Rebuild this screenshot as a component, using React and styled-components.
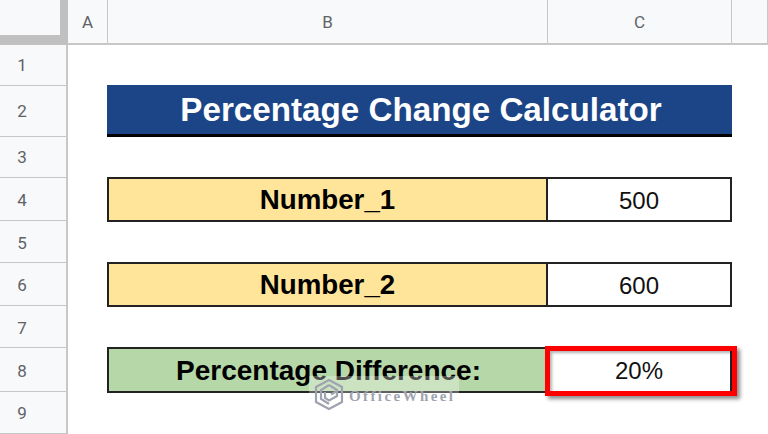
import React from 'react';
import styled, { createGlobalStyle } from 'styled-components';

const GlobalStyle = createGlobalStyle`
  html, body {
    margin: 0;
    padding: 0;
    background: #fff;
    overflow: hidden;
  }
`;

const Sheet = styled.div`
  display: grid;
  grid-template-columns: 68px 40px 440px 184px 36px;
  grid-template-rows: 45px 41px 51px 41px 43px 42px 43px 42px 44px 42px;
  width: 768px;
  height: 434px;
  font-family: Roboto, "Liberation Sans", sans-serif;
  overflow: hidden;
`;

const Corner = styled.div`
  background: #f8f9fa;
  border-right: 8px solid #c0c0c0;
  border-bottom: 10px solid #c0c0c0;
`;

const ColHead = styled.div`
  display: flex;
  align-items: center;
  justify-content: center;
  background: #f8f9fa;
  border-right: 1px solid #c7c7c7;
  border-bottom: 2px solid #c7c7c7;
  color: #5f6368;
  font-size: 17px;
`;

const RowHead = styled.div`
  display: flex;
  align-items: center;
  justify-content: center;
  padding: ${p => (p.$low ? '2px' : '0')} 22px 0 0;
  background: #f8f9fa;
  border-right: 2px solid #c7c7c7;
  border-bottom: 1px solid #c7c7c7;
  color: #5f6368;
  font-size: 17px;
`;

const Title = styled.div`
  grid-column: 3 / 5;
  display: flex;
  align-items: center;
  justify-content: center;
  margin: -1px 0 0 -1px;
  padding-left: 3px;
  background: #1c4587;
  border-bottom: 3px solid #000;
  color: #fff;
  font-family: "Liberation Sans", Arial, sans-serif;
  font-size: 33.2px;
  font-weight: 700;
`;

const Gap = styled.div`
  grid-column: 2 / 6;
`;

const Spacer = styled.div``;

const Label = styled.div`
  display: flex;
  align-items: center;
  justify-content: center;
  margin: -1px 0 -1px -1px;
  padding-top: 1px;
  background: ${p => p.$bg};
  border: 2px solid #222;
  color: #000;
  font-family: "Liberation Sans", Arial, sans-serif;
  font-size: 27.7px;
  font-weight: 700;
`;

const WideLabel = styled(Label)`
  padding-left: 2px;
  font-size: 28px;
`;

const Value = styled.div`
  position: relative;
  display: flex;
  align-items: center;
  justify-content: center;
  margin: -1px 0 -1px 0;
  padding-top: 2px;
  background: #fff;
  border: 2px solid #222;
  border-left-width: 0;
  color: #111;
  font-family: "Liberation Sans", Arial, sans-serif;
  font-size: 24px;
`;

const Highlight = styled.div`
  position: absolute;
  left: -3px;
  top: -3px;
  width: 192px;
  height: 50px;
  box-sizing: border-box;
  border: 5px solid #ff0000;
  box-shadow: 3px 3px 4px rgba(0, 0, 0, 0.45), inset 2px 2px 3px rgba(0, 0, 0, 0.3);
`;

const Watermark = styled.div`
  position: absolute;
  left: 309px;
  top: 376px;
  width: 150px;
  height: 36px;
  display: flex;
  align-items: center;
  gap: 5px;
  padding-left: 5px;
  box-sizing: border-box;
  background: linear-gradient(rgba(255, 255, 255, 0.3), rgba(255, 255, 255, 0.3) 40%, rgba(255, 255, 255, 0));
`;

const MarkText = styled.span`
  font-family: "Liberation Serif", serif;
  font-size: 15px;
  font-weight: 700;
  letter-spacing: 2.4px;
  color: #a0a4b0;
  padding-top: 4px;
`;

const Page = styled.div`
  position: relative;
  width: 768px;
  height: 434px;
`;

const Logo = () => (
  <svg width="30" height="33" viewBox="0 0 30 33" fill="none" stroke="#9fa3b0" strokeWidth="2.2" style={{ flex: 'none' }}>
    <path d="M15 2 L28 9 V24 L15 31 L2 24 V9 Z" />
    <path d="M15 7 L23 12 M15 7 L7 12 V21 L15 26" />
    <path d="M11 14 V20 L15 22.5 L23 18 V13 L17 16.5" />
  </svg>
);

const rows = [1, 2, 3, 4, 5, 6, 7, 8, 9];

const renderRow = n => {
  if (n === 2) return <><Spacer /><Title>Percentage Change Calculator</Title><Spacer /></>;
  if (n === 4) return <><Spacer /><Label $bg="#ffe599">Number_1</Label><Value>500</Value><Spacer /></>;
  if (n === 6) return <><Spacer /><Label $bg="#ffe599">Number_2</Label><Value>600</Value><Spacer /></>;
  if (n === 8) return <><Spacer /><WideLabel $bg="#b6d7a8">Percentage Difference:</WideLabel><Value>20%<Highlight /></Value><Spacer /></>;
  return <Gap />;
};

export default function App() {
  return (
    <Page>
      <GlobalStyle />
      <Sheet>
        <Corner />
        <ColHead>A</ColHead>
        <ColHead>B</ColHead>
        <ColHead>C</ColHead>
        <ColHead />
        {rows.map(n => (
          <React.Fragment key={n}>
            <RowHead $low={n > 3 && n < 9}>{n}</RowHead>
            {renderRow(n)}
          </React.Fragment>
        ))}
      </Sheet>
      <Watermark>
        <Logo />
        <MarkText>OfficeWheel</MarkText>
      </Watermark>
    </Page>
  );
}
